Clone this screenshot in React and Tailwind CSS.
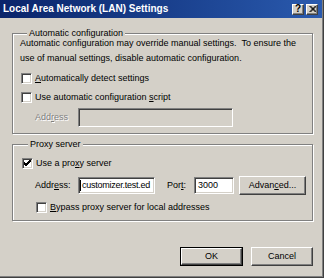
import React from "react";

const face = "bg-[#d4d0c8]";
const sunken =
  "border-t border-l border-b border-r border-t-[#808080] border-l-[#808080] border-b-white border-r-white shadow-[inset_1px_1px_0_#404040,inset_-1px_-1px_0_#d4d0c8]";
const raised =
  "border-t border-l border-b border-r border-t-white border-l-white border-b-[#404040] border-r-[#404040] shadow-[inset_-1px_-1px_0_#808080]";
const group =
  "flex flex-col border border-[#808080] shadow-[1px_1px_0_#fff,inset_1px_1px_0_#fff]";
const legend = "self-start -mt-[6px] ml-[6px] px-[2px] h-[11px] leading-[11px] bg-[#d4d0c8]";

function Checkbox({ checked }) {
  return (
    <span className={`w-[11px] h-[11px] shrink-0 bg-white flex items-center justify-center ${sunken}`}>
      {checked && (
        <svg width="7" height="7" viewBox="0 0 7 7">
          <path d="M0 3 L2 5 L7 0 M0 4 L2 6 L7 1 M0 2 L2 4 L7 -1" stroke="#000" strokeWidth="1" fill="none" />
        </svg>
      )}
    </span>
  );
}

function CheckRow({ checked, className = "", children }) {
  return (
    <div className={`flex items-center h-[11px] gap-[3px] leading-[11px] ${className}`}>
      <Checkbox checked={checked} />
      <span>{children}</span>
    </div>
  );
}

export default function App() {
  return (
    <div
      className={`w-[324px] h-[278px] ${face} text-black text-[9px] font-['Liberation_Sans',Arial,sans-serif] pr-[2px] pb-[2px] shadow-[inset_-1px_-1px_0_#404040,inset_-2px_-2px_0_#808080] flex flex-col`}
    >
      {/* title bar */}
      <div className="h-[18px] bg-gradient-to-r from-[#0a246a] to-[#2a5aae] flex items-center pl-[3px] pr-[4px]">
        <span className="text-white font-bold text-[10px] leading-[18px] flex-1">
          Local Area Network (LAN) Settings
        </span>
        <div className="flex gap-[2px]">
          <span className={`w-[12px] h-[11px] ${face} ${raised} flex items-center justify-center font-bold text-[10px] leading-none`}>
            ?
          </span>
          <span className={`w-[12px] h-[11px] ${face} ${raised} flex items-center justify-center`}>
            <svg width="7" height="6" viewBox="0 0 7 6">
              <path d="M0.5 0 L6.5 6 M6.5 0 L0.5 6 M1.5 0 L7.5 6 M7.5 0 L1.5 6" stroke="#000" strokeWidth="1" />
            </svg>
          </span>
        </div>
      </div>

      <div className="pl-[12px] w-[313px] flex flex-col mt-[15px]">
        {/* automatic configuration */}
        <div className={`${group} pl-[8px] pb-[6px]`}>
          <span className={legend}>Automatic configuration</span>
          <p className="-mt-[3px] leading-[15px] -ml-[1px]">
            Automatic configuration may override manual settings.&nbsp; To ensure the
            <br />
            use of manual settings, disable automatic configuration.
          </p>
          <CheckRow className="mt-[7px]">
            <span className="underline">A</span>utomatically detect settings
          </CheckRow>
          <CheckRow className="mt-[8px]">
            Use automatic configuration <span className="underline">s</span>cript
          </CheckRow>
          <div className="flex items-center h-[19px] mt-[5px] pl-[14px]">
            <span className="w-[43px] text-[#808080] [text-shadow:1px_1px_0_#fff]">
              Add<span className="underline">r</span>ess
            </span>
            <span className={`w-[155px] h-[19px] ${face} ${sunken}`} />
          </div>
        </div>

        {/* proxy server */}
        <div className={`${group} mt-[10px] pl-[9px] pb-[7px]`}>
          <span className={legend}>Proxy server</span>
          <CheckRow checked className="mt-[8px]">
            Use a pro<span className="underline">x</span>y server
          </CheckRow>
          <div className="flex items-center h-[19px] mt-[7px] pl-[13px]">
            <span className="w-[43px]">
              Addr<span className="underline">e</span>ss:
            </span>
            <span className={`w-[77px] h-[17px] bg-white ${sunken} flex items-center pl-[1px] leading-[13px] overflow-hidden whitespace-nowrap tracking-[-0.25px]`}>
              <span className="w-px h-[11px] bg-black mr-[1px] shrink-0" />
              customizer.test.ed
            </span>
            <span className="ml-[12px] w-[27px]">
              Por<span className="underline">t</span>:
            </span>
            <span className={`w-[40px] h-[17px] bg-white ${sunken} flex items-center pl-[3px] leading-[13px]`}>
              3000
            </span>
            <button className={`ml-[5px] w-[67px] h-[19px] ${face} ${raised} flex items-center justify-center leading-none`}>
              Advan<span className="underline">c</span>ed...
            </button>
          </div>
          <CheckRow className="mt-[7px] pl-[14px]">
            <span className="underline">B</span>ypass proxy server for local addresses
          </CheckRow>
        </div>

        {/* dialog buttons */}
        <div className="flex justify-end gap-[8px] mt-[26px]">
          <div className="w-[63px] h-[19px] border border-black">
            <button className={`w-full h-full ${face} ${raised} flex items-center justify-center leading-none`}>
              OK
            </button>
          </div>
          <button className={`w-[62px] h-[19px] ${face} ${raised} flex items-center justify-center leading-none`}>
            Cancel
          </button>
        </div>
      </div>
    </div>
  );
}
